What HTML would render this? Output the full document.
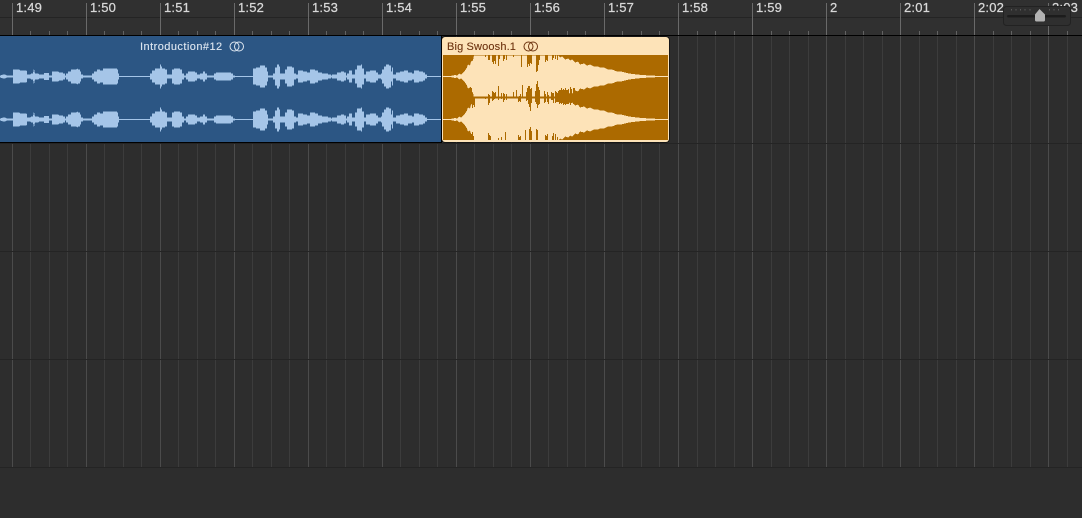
<!DOCTYPE html>
<html><head><meta charset="utf-8"><style>
html,body{margin:0;padding:0;background:#2d2d2d;width:1082px;height:518px;overflow:hidden}
svg{display:block;position:absolute;left:0;top:0}
text{font-family:"Liberation Sans",sans-serif}
</style></head><body>
<svg width="1082" height="518" viewBox="0 0 1082 518">
<defs>
<path id="mj" d="M12.5 0v1M86.5 0v1M160.5 0v1M234.5 0v1M308.5 0v1M382.5 0v1M456.5 0v1M530.5 0v1M604.5 0v1M678.5 0v1M752.5 0v1M826.5 0v1M900.5 0v1M974.5 0v1M1048.5 0v1"/>
<path id="mn" d="M30.5 0v1M49.5 0v1M67.5 0v1M104.5 0v1M123.5 0v1M141.5 0v1M178.5 0v1M197.5 0v1M215.5 0v1M252.5 0v1M271.5 0v1M289.5 0v1M326.5 0v1M345.5 0v1M363.5 0v1M400.5 0v1M419.5 0v1M437.5 0v1M474.5 0v1M493.5 0v1M511.5 0v1M548.5 0v1M567.5 0v1M585.5 0v1M622.5 0v1M641.5 0v1M659.5 0v1M697.5 0v1M715.5 0v1M734.5 0v1M771.5 0v1M789.5 0v1M808.5 0v1M845.5 0v1M863.5 0v1M882.5 0v1M919.5 0v1M937.5 0v1M956.5 0v1M993.5 0v1M1011.5 0v1M1030.5 0v1M1067.5 0v1"/>
<path id="bw" d="M0 0V-1L3-2H5L7-1H13V-7H19L20-6H26L27-5V-2H30L31-3H33L34-8 35-3H38L39-2H44V-3.5H49V-1H52V-5H58L59-4H63V-3H65V-1H66V-3H68V-5H71V-7H76L77-8 78-7H80V-5H81V-2H83V-1H92V-3H94V-5H97V-7H100V-6H103V-8H117V-7H118V-3H119V-.5H150V-3H152V-6H155V-8H160V-12H161V-10H162V-8H165V-7H167V-2H172V-7H174V-8H180V-7H182V-3H184V-1H186V-3H188V-5H195V-4H197V-2H200V-3H203V-5H205V-3H207V-1H214V-3H216V-4H231V-3H233V-1H235V-.5H253V-8H256V-9H260V-11H265V-9H267V-5H268V-1H273V-3H275V-9H277V-12H279V-10H280V-3H285V-7H287V-10H292V-9H294V-3H296V-2H298V-6H303V-5H307V-4H310V-7H315V-6H318V-4H322V-3H328V-2H331V-1H332V-2H337V-4H341V-5H344V-4H346V-1H347V-3H349V-6H352V-2H355V-7H357V-11H361V-12H362V-8H364V-2H366V-5H370V-6H376V-4H378V-2H381V-3H382V-7H384V-10H386V-12H389V-11H391V-5H392V-9H393V-2H396V-4H400V-5H404V-6H408V-4H412V-3H414V-6H419V-5H423V-4H425V-2H427V-.5H441V0Z"/>
<path id="ow" d="M443 0V-.5H450L455-1.5 457-1 459-3 461-2 463-4 465-6 467-9 468-12 470-11 471-15 473-16 474-21H558L560-19 562-20 565-17 568-18 570-16 572-17 575-14 578-15 580-12 584-13 587-11 590-12 594-10 598-10 600-9 604-9 608-7 612-7 617-5 621-5 625-4 629-3 633-2.5 637-2 642-1.5 650-1 660-.5H668V0Z"/>
</defs>
<rect width="1082" height="518" fill="#2d2d2d"/>
<rect width="1082" height="35" fill="#303030"/>
<rect y="17" width="1082" height="1" fill="#242424"/>
<rect y="35" width="1082" height="1" fill="#000"/>
<g shape-rendering="crispEdges" fill="none">
<use href="#mn" transform="translate(0,36) scale(1,431)" stroke="#3c3c3c"/>
<use href="#mj" transform="translate(0,36) scale(1,431)" stroke="#4b4b4b"/>
<use href="#mn" transform="translate(0,31) scale(1,4)" stroke="#626262"/>
<use href="#mj" transform="translate(0,3) scale(1,32)" stroke="#6a6a6a"/>
</g>
<g fill="#242424" shape-rendering="crispEdges">
<rect y="143" width="1082" height="1"/><rect y="251" width="1082" height="1"/><rect y="359" width="1082" height="1"/><rect y="467" width="1082" height="1"/>
</g>
<g font-size="13" fill="#d8d8d8" stroke="#d8d8d8" stroke-width=".25" letter-spacing=".2">
<text x="16" y="12">1:49</text><text x="90" y="12">1:50</text><text x="164" y="12">1:51</text><text x="238" y="12">1:52</text><text x="312" y="12">1:53</text><text x="386" y="12">1:54</text><text x="460" y="12">1:55</text><text x="534" y="12">1:56</text><text x="608" y="12">1:57</text><text x="682" y="12">1:58</text><text x="756" y="12">1:59</text><text x="830" y="12">2</text><text x="904" y="12">2:01</text><text x="978" y="12">2:02</text><text x="1052" y="12">2:03</text>
</g>
<!-- blue region -->
<rect x="0" y="36" width="441" height="106" fill="#2c5684"/>
<rect x="0" y="142" width="442" height="1" fill="#000"/>
<rect x="441" y="36" width="1" height="107" fill="#000"/>
<g fill="#a5c5e8" shape-rendering="crispEdges">
<use href="#bw" transform="translate(0,76.5)"/><use href="#bw" transform="translate(0,76.5) scale(1,-1)"/>
<use href="#bw" transform="translate(0,119.5)"/><use href="#bw" transform="translate(0,119.5) scale(1,-1)"/>
</g>
<text x="140" y="50" font-size="11" fill="#dde6f0" stroke="#dde6f0" stroke-width=".12" letter-spacing=".45">Introduction#12</text>
<g fill="none" stroke="#dde6f0" stroke-width="1"><circle cx="234.5" cy="46.5" r="4.5"/><circle cx="239" cy="46.5" r="4.5"/></g>
<!-- orange region -->
<rect x="441.5" y="36.5" width="228" height="106" rx="3" fill="#000"/>
<rect x="442" y="37" width="227" height="105" rx="3" fill="#fde3b8"/>
<rect x="443" y="55" width="225" height="85" fill="#ac6a00"/>
<g fill="#fde3b8" shape-rendering="crispEdges">
<use href="#ow" transform="translate(0,76.5)"/><use href="#ow" transform="translate(0,76.5) scale(1,-1)"/>
<use href="#ow" transform="translate(0,119.5)"/><use href="#ow" transform="translate(0,119.5) scale(1,-1)"/>
</g>
<g fill="none" stroke="#ac6a00" stroke-width="1" shape-rendering="crispEdges">
<path d="M470.5 97v-10M471.5 97v-9M472.5 97v11M473.5 97v8M474.5 97v10M485.5 55v2M488.5 55v5M489.5 55v5M492.5 55v7M493.5 55v9M494.5 55v6M495.5 55v9M498.5 55v11M499.5 55v4M503.5 55v6M504.5 55v4M506.5 55v5M513.5 55v2M521.5 55v12M527.5 55v12M528.5 55v9M529.5 55v11M530.5 55v8M531.5 55v9M536.5 55v17M537.5 55v16M538.5 55v10M539.5 55v5M545.5 55v7M546.5 55v5M547.5 55v6M552.5 55v5M553.5 55v3M555.5 55v4M557.5 55v5"/>
<path d="M485.5 97v2M488.5 94v11M489.5 95v8M492.5 91v10M493.5 92v8M494.5 93v6M495.5 92v6M498.5 86v14M501.5 93v6M503.5 93v9M504.5 94v6M506.5 94v6M513.5 92v5M516.5 90v7M518.5 97v5M519.5 96v5M520.5 94v8M522.5 85v13M526.5 92v9M527.5 88v12M528.5 86v18M529.5 86v21M530.5 89v22M531.5 88v15M535.5 91v11M536.5 84v20M537.5 81v27M538.5 87v18M539.5 90v14M544.5 91v12M545.5 94v8M547.5 92v10M548.5 95v9M551.5 92v8M552.5 93v7M553.5 93v10M555.5 91v12M556.5 92v10M557.5 93v9M558.5 91v11M559.5 90v14M560.5 90v13M561.5 88v16M562.5 90v13M563.5 89v16M564.5 90v14M565.5 88v17M566.5 90v14M567.5 90v14M568.5 89v15M570.5 87v18M571.5 89v14M573.5 88v16M574.5 88v15"/>
<path d="M470.5 133v7M471.5 134v6M472.5 132v8M473.5 136v4M488.5 133v7M489.5 135v5M490.5 136v4M498.5 138v2M501.5 137v3M505.5 132v8M518.5 135v5M519.5 137v3M520.5 136v4M525.5 130v10M529.5 129v11M530.5 127v13M531.5 131v9M536.5 129v11M537.5 130v10M545.5 135v5M546.5 136v4M547.5 134v6M552.5 136v4M553.5 133v7M555.5 134v6M557.5 137v3"/>
</g>
<rect x="472" y="96.5" width="96" height="1.2" fill="#ac6a00"/>
<rect x="443" y="76" width="225" height="1" fill="#fde3b8"/>
<rect x="443" y="119" width="225" height="1" fill="#fde3b8"/>
<text x="447" y="50" font-size="11" fill="#6e3410" stroke="#6e3410" stroke-width=".12" letter-spacing=".15">Big Swoosh.1</text>
<g fill="none" stroke="#6e3410" stroke-width="1"><circle cx="528.5" cy="46.5" r="4.5"/><circle cx="533" cy="46.5" r="4.5"/></g>
<!-- slider -->
<rect x="1003.5" y="6.5" width="67" height="19" rx="3" fill="#2f2f2f" stroke="#222"/>
<rect x="1007" y="15" width="59" height="2.5" rx="1.2" fill="#1c1c1c"/>
<path d="M1011.5 9v1.5M1016 9v1.5M1020.5 9v1.5M1025 9v1.5M1030 9v1.5M1049.5 9v1.5M1054 9v1.5M1058.5 9v1.5" stroke="#5a5a5a" fill="none"/>
<path d="M1039.5 9L1045 14.5V20a1.5 1.5 0 0 1-1.5 1.5H1036.5a1.5 1.5 0 0 1-1.5-1.5V14.5Z" fill="#b2b2b2"/>
</svg>
</body></html>
